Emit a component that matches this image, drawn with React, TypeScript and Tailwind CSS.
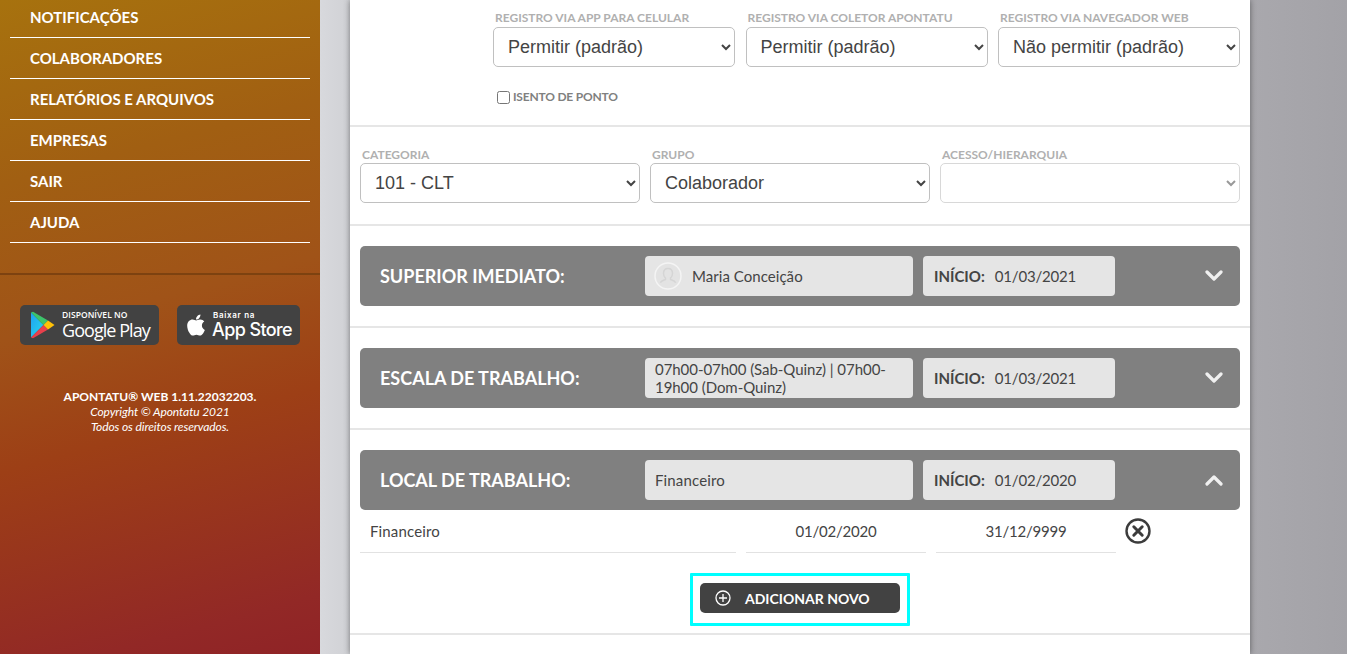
import React from "react";
import { FaApple } from "react-icons/fa";

const lato = "font-['Lato','Liberation_Sans',sans-serif]";

const menu = ["NOTIFICAÇÕES", "COLABORADORES", "RELATÓRIOS E ARQUIVOS", "EMPRESAS", "SAIR", "AJUDA"];

function Field({ label, value, disabled, tight }: { label: string; value: string; disabled?: boolean; tight?: boolean }) {
  return (
    <div className="flex flex-col">
      <span className="h-[14px] pl-[2px] text-[12px] leading-[14px] font-bold text-[#b0b0b0] whitespace-nowrap">{label}</span>
      <select
        disabled={disabled}
        defaultValue={value}
        className={`${tight ? "mt-[1px]" : "mt-[2px]"} h-[40px] w-full rounded-[5px] border bg-white pl-[10px] pr-[3px] font-['Liberation_Sans',sans-serif] text-[18px] ${disabled ? "border-[#d8d8d8] text-[#999]" : "border-[#c0c0c0] text-[#444]"}`}
      >
        <option value={value}>{value}</option>
      </select>
    </div>
  );
}

function Divider() {
  return <div className="h-[2px] bg-[#e6e6e6]" />;
}

function Chevron({ up }: { up?: boolean }) {
  return (
    <svg width="18" height="12" viewBox="0 0 18 12" fill="none" stroke="#f0f0f0" strokeWidth="3.2" strokeLinecap="round" strokeLinejoin="round">
      <path d={up ? "M2 10 L9 3 L16 10" : "M2 2 L9 9 L16 2"} />
    </svg>
  );
}

function Bar({ title, children, date, up }: { title: string; children: React.ReactNode; date: string; up?: boolean }) {
  return (
    <div className="mx-[10px] flex h-[60px] items-center rounded-[5px] bg-[#808080] py-[10px] pl-[20px]">
      <span className="w-[265px] shrink-0 text-[18px] font-bold text-white whitespace-nowrap">{title}</span>
      <div className="flex h-[40px] w-[268px] shrink-0 items-center rounded-[4px] bg-[#e5e5e5] text-[15px] text-[#444]">{children}</div>
      <div className="ml-[10px] flex h-[40px] w-[192px] shrink-0 items-center rounded-[4px] bg-[#e5e5e5] pl-[11px] text-[15px] text-[#444]">
        <b className="font-bold">INÍCIO:</b>
        <span className="ml-[10px] tracking-[-0.2px]">{date}</span>
      </div>
      <div className="flex flex-1 justify-end pr-[17px]">
        <Chevron up={up} />
      </div>
    </div>
  );
}

function GooglePlayBadge() {
  return (
    <div className="flex h-[40px] w-[139px] items-center rounded-[5px] bg-[#424242] pl-[10px]">
      <svg width="25" height="28" viewBox="0 0 25 28" className="shrink-0">
        <defs>
          <linearGradient id="gpBlue" x1="0" y1="0" x2="1" y2="1">
            <stop offset="0" stopColor="#1fa2f3" />
            <stop offset="1" stopColor="#28d8e8" />
          </linearGradient>
        </defs>
        <path d="M1 1.5 L13.5 14 L1 26.5 Z" fill="url(#gpBlue)" />
        <path d="M1 1.5 L13.5 14 L18 9.5 L3 0.8 Z" fill="#3dc46c" />
        <path d="M1 26.5 L13.5 14 L18 18.5 L3 27.2 Z" fill="#e8404c" />
        <path d="M18 9.5 L24.5 14 L18 18.5 L13.5 14 Z" fill="#ffc107" />
      </svg>
      <div className="ml-[7px] flex flex-col font-['Open_Sans',sans-serif] text-white">
        <span className="text-[8.5px] leading-[10px] font-semibold tracking-[0.05px] whitespace-nowrap">DISPONÍVEL NO</span>
        <span className="text-[18px] leading-[20px] font-medium tracking-[-0.95px] whitespace-nowrap">Google Play</span>
      </div>
    </div>
  );
}

function AppStoreBadge() {
  return (
    <div className="flex h-[40px] w-[123px] items-center rounded-[5px] bg-[#424242] pl-[8px]">
      <FaApple className="h-[24px] w-[22px] shrink-0 text-white" />
      <div className="ml-[5px] flex flex-col font-['Inter',sans-serif] text-white">
        <span className="pl-[1px] text-[8px] leading-[10px] font-semibold tracking-[0.7px] whitespace-nowrap">Baixar na</span>
        <span className="text-[18px] leading-[20px] font-medium tracking-[-0.6px] whitespace-nowrap">App Store</span>
      </div>
    </div>
  );
}

export default function App() {
  return (
    <div className={`flex h-[654px] w-[1347px] overflow-hidden ${lato}`}>
      <aside className="flex h-full w-[320px] shrink-0 flex-col bg-[linear-gradient(165deg,#a7720e_0%,#a15f12_25%,#a05318_46%,#9d3f16_64%,#922826_92%,#8f2326_100%)] text-white">
        <ul className="mx-[10px] -mt-[3px]">
          {menu.map((m) => (
            <li key={m} className="flex h-[41px] items-center border-b border-white pl-[20px] text-[15px] font-bold">
              {m}
            </li>
          ))}
        </ul>
        <div className="mt-[30px] h-[2px] bg-[#7d4210]" />
        <div className="mt-[30px] flex justify-between px-[20px]">
          <GooglePlayBadge />
          <AppStoreBadge />
        </div>
        <div className="mt-[44px] text-center text-[12px] leading-[15px]">
          <div className="font-bold">APONTATU® WEB 1.11.22032203.</div>
          <div className="italic tracking-[-0.1px]">Copyright © Apontatu 2021</div>
          <div className="italic tracking-[-0.1px]">Todos os direitos reservados.</div>
        </div>
      </aside>

      <div className="flex-1 bg-[linear-gradient(90deg,#d8d9dd_0px,#d0d1d5_30px,#a9a8ad_930px,#a3a2a7_1027px)] pl-[30px] pr-[97px]">
        <main className="h-full w-[900px] bg-white shadow-[0_0_6px_rgba(0,0,0,0.45)]">
          <section className="h-[125px] pt-[11px] pl-[143px] pr-[10px]">
            <div className="grid grid-cols-3 gap-x-[10.5px]">
              <Field label="REGISTRO VIA APP PARA CELULAR" value="Permitir (padrão)" />
              <Field label="REGISTRO VIA COLETOR APONTATU" value="Permitir (padrão)" />
              <Field label="REGISTRO VIA NAVEGADOR WEB" value="Não permitir (padrão)" />
            </div>
            <label className="mt-[21px] flex items-center pl-[4px] text-[12px] font-bold tracking-[-0.2px] text-[#808080]">
              <input type="checkbox" className="m-0 h-[13px] w-[13px]" />
              <span className="ml-[3px]">ISENTO DE PONTO</span>
            </label>
          </section>
          <Divider />

          <section className="h-[97px] pt-[21px] px-[10px]">
            <div className="grid grid-cols-[280px_280px_300px] gap-x-[10px]">
              <Field tight label="CATEGORIA" value="101 - CLT" />
              <Field tight label="GRUPO" value="Colaborador" />
              <Field tight label="ACESSO/HIERARQUIA" value="" disabled />
            </div>
          </section>
          <Divider />

          <div className="py-[20px]">
            <Bar title="SUPERIOR IMEDIATO:" date="01/03/2021">
              <svg width="28" height="28" viewBox="0 0 28 28" className="ml-[9px] shrink-0">
                <circle cx="14" cy="14" r="13" fill="#e3e3e3" stroke="#f4f4f4" strokeWidth="1.5" />
                <path d="M14 6.5c-2.9 0-4.5 2.2-4.5 5 0 2 .9 3.7 2 4.6v1.4c-2 .8-4.4 1.5-5.2 3.2M14 6.5c2.9 0 4.5 2.2 4.5 5 0 2-.9 3.7-2 4.6v1.4c2 .8 4.4 1.5 5.2 3.2" fill="none" stroke="#d5d5d5" strokeWidth="1.5" />
              </svg>
              <span className="ml-[10px] tracking-[0.05px]">Maria Conceição</span>
            </Bar>
          </div>
          <Divider />

          <div className="py-[20px]">
            <Bar title="ESCALA DE TRABALHO:" date="01/03/2021">
              <span className="px-[10px] leading-[18px] tracking-[-0.05px]">07h00-07h00 (Sab-Quinz) | 07h00-19h00 (Dom-Quinz)</span>
            </Bar>
          </div>
          <Divider />

          <div className="pt-[20px]">
            <Bar title="LOCAL DE TRABALHO:" date="01/02/2020" up>
              <span className="px-[10px] tracking-[0.15px]">Financeiro</span>
            </Bar>
            <div className="mx-[10px] flex h-[43px] gap-x-[10px] text-[15px] text-[#444]">
              <div className="flex w-[376px] items-center border-b border-[#e2e2e2] pt-[1px] pl-[10px] tracking-[0.15px]">Financeiro</div>
              <div className="flex w-[180px] items-center justify-center border-b border-[#e2e2e2] pt-[1px] tracking-[-0.2px]">01/02/2020</div>
              <div className="flex w-[180px] items-center justify-center border-b border-[#e2e2e2] pt-[1px] tracking-[-0.2px]">31/12/9999</div>
              <svg width="26" height="26" viewBox="0 0 26 26" fill="none" stroke="#3c3c3c" className="mt-[8px] -ml-[1px]">
                <circle cx="13" cy="13" r="11.5" strokeWidth="2.4" />
                <path d="M8.8 8.8 L17.2 17.2 M17.2 8.8 L8.8 17.2" strokeWidth="3" strokeLinecap="round" />
              </svg>
            </div>
            <div className="flex justify-center pt-[20px]">
              <div className="box-border h-[53px] w-[220px] rounded-[1px] border-[3px] border-[#00ffff] px-[7px] pt-[7px]">
                <button className="flex h-[30px] w-[200px] items-center rounded-[5px] bg-[#424242] pl-[15px] text-[14px] font-bold text-white">
                  <svg width="16" height="16" viewBox="0 0 16 16" fill="none" stroke="#fff" strokeWidth="1.3" className="shrink-0">
                    <circle cx="8" cy="8" r="7" />
                    <path d="M8 4 V12 M4 8 H12" />
                  </svg>
                  <span className="ml-[14px]">ADICIONAR NOVO</span>
                </button>
              </div>
            </div>
            <div className="mt-[7px]">
              <Divider />
            </div>
          </div>
        </main>
      </div>
    </div>
  );
}
